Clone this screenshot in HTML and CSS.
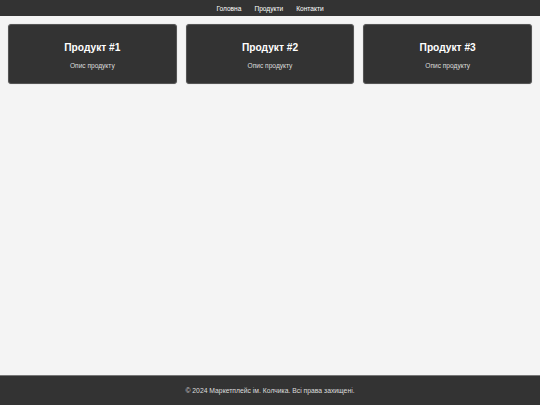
FILE: index.html
```html
<!DOCTYPE html>
<html lang="uk">
<head>
<meta charset="utf-8">
<link rel="stylesheet" href="styles.css">
</head>
<body>
<header class="header">
  <nav class="nav">
    <a href="#">Головна</a>
    <a href="#">Продукти</a>
    <a href="#">Контакти</a>
  </nav>
</header>
<main class="products">
  <div class="card"><h2>Продукт #1</h2><p>Опис продукту</p></div>
  <div class="card"><h2>Продукт #2</h2><p>Опис продукту</p></div>
  <div class="card"><h2>Продукт #3</h2><p>Опис продукту</p></div>
</main>
<footer class="footer">© 2024 Маркетплейс ім. Колчика. Всі права захищені.</footer>
</body>
</html>
```
FILE: styles.css
```css
* { box-sizing: border-box; }
html, body { margin: 0; padding: 0; }
body {
  font-family: "Liberation Sans", Arial, sans-serif;
  background: #f4f4f4;
  min-height: 100vh;
  display: flex;
  flex-direction: column;
}
.header {
  background: #333;
  height: 16px;
  display: flex;
  align-items: center;
  justify-content: center;
}
.nav { display: flex; gap: 13px; }
.nav a {
  color: #fff;
  text-decoration: none;
  font-size: 6.6px;
}
.products {
  display: grid;
  grid-template-columns: repeat(3, 1fr);
  gap: 9px;
  padding: 8px 8px;
}
.card {
  background: #333;
  color: #fff;
  border-radius: 3px;
  height: 60px;
  border: 1px solid #555;
  box-shadow: 0 0 1px rgba(0,0,0,0.3);
  text-align: center;
  padding-top: 16px;
}
.card h2 {
  margin: 0;
  font-size: 10.2px;
  line-height: 14px;
  font-weight: bold;
}
.card p {
  margin: 6px 0 0;
  font-size: 6.6px;
  line-height: 9px;
  color: #ddd;
}
.footer {
  margin-top: auto;
  background: #333;
  color: #ddd;
  height: 30px;
  border-top: 1px solid #777;
  display: flex;
  align-items: center;
  justify-content: center;
  font-size: 6.8px;
}
```
